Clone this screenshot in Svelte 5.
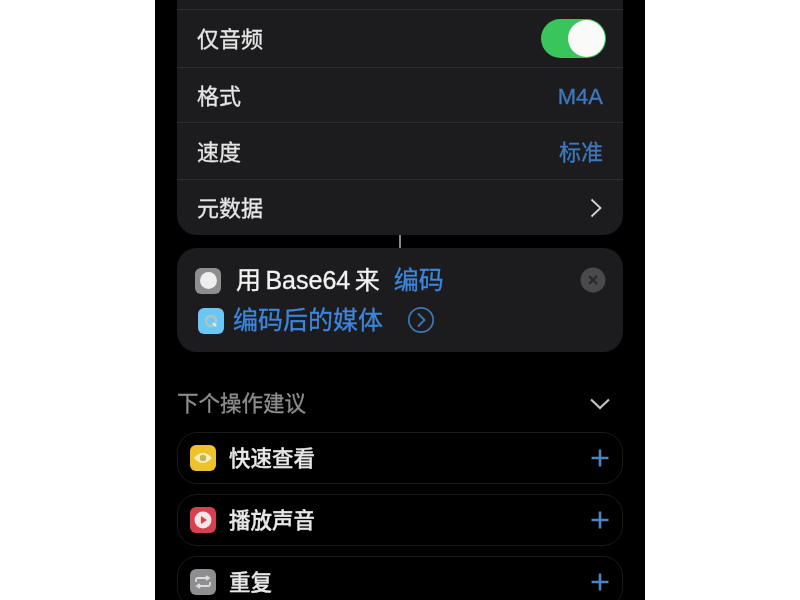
<script>
  const settings = [
    { label: '格式', value: 'M4A', latin: true },
    { label: '速度', value: '标准', latin: false }
  ];

  const suggestions = [
    { name: '快速查看', icon: 'eye' },
    { name: '播放声音', icon: 'play' },
    { name: '重复', icon: 'repeat' }
  ];
</script>

<div class="page">
  <div class="phone">
    <section class="card">
      <div class="row sliver"></div>
      <div class="row">
        <span class="text">仅音频</span>
        <div class="toggle"><div class="knob"></div></div>
      </div>
      {#each settings as item}
        <div class="row">
          <span class="text">{item.label}</span>
          <span class="value" class:text={!item.latin} class:latin={item.latin}>{item.value}</span>
        </div>
      {/each}
      <div class="row last">
        <span class="text">元数据</span>
        <svg class="chevron" width="14" height="22" viewBox="0 0 14 22">
          <path d="M2.5 2.5 L11.5 11 L2.5 19.5" fill="none" stroke="#d4d4d4" stroke-width="1.8" />
        </svg>
      </div>
    </section>

    <div class="connector"></div>

    <section class="action">
      <div class="line">
        <div class="app-icon gray"><div class="dot"></div></div>
        <span class="title">用 Base64 来</span>
        <span class="token">编码</span>
        <svg class="close" width="26" height="26" viewBox="0 0 26 26">
          <circle cx="13" cy="13" r="12.5" fill="#4a4a4c" />
          <path d="M9 9 L17 17 M17 9 L9 17" stroke="#2a2a2c" stroke-width="2.4" />
        </svg>
      </div>
      <div class="line second">
        <div class="app-icon blue">
          <svg width="16" height="16" viewBox="0 0 16 16">
            <circle cx="8" cy="8" r="5" fill="none" stroke="#a9c8c4" stroke-width="2.6" />
            <path d="M10 10 L13 13" stroke="#d6f1fb" stroke-width="2.4" />
          </svg>
        </div>
        <span class="token big">编码后的媒体</span>
        <svg class="more" width="28" height="28" viewBox="0 0 28 28">
          <circle cx="14" cy="14" r="12.2" fill="none" stroke="#3f78b8" stroke-width="1.7" />
          <path d="M11 7.5 L17.5 14 L11 20.5" fill="none" stroke="#3f78b8" stroke-width="1.8" />
        </svg>
      </div>
    </section>

    <div class="heading">
      <span class="text">下个操作建议</span>
      <svg width="22" height="14" viewBox="0 0 22 14">
        <path d="M2 2.5 L11 11 L20 2.5" fill="none" stroke="#c4c4c4" stroke-width="2.2" />
      </svg>
    </div>

    <div class="list">
      {#each suggestions as item}
        <div class="item">
          <div class="app-icon {item.icon}">
            {#if item.icon === 'eye'}
              <svg width="20" height="14" viewBox="0 0 20 14">
                <path d="M1 7 Q10 -3 19 7 Q10 17 1 7 Z" fill="#f7eebb" />
                <circle cx="10" cy="7" r="3.2" fill="#c4b450" />
              </svg>
            {:else if item.icon === 'play'}
              <svg width="18" height="18" viewBox="0 0 18 18">
                <circle cx="9" cy="9" r="8.5" fill="#f8e6e8" />
                <path d="M7 5 L13 9 L7 13 Z" fill="#d8404f" />
              </svg>
            {:else}
              <svg width="18" height="14" viewBox="0 0 18 14">
                <path d="M2 7 V5 Q2 3 4 3 H14 M12 1 L15 3 L12 5 M16 7 V9 Q16 11 14 11 H4 M6 9 L3 11 L6 13" fill="none" stroke="#dcdcdc" stroke-width="1.8" />
              </svg>
            {/if}
          </div>
          <span class="name text">{item.name}</span>
          <svg class="plus" width="20" height="20" viewBox="0 0 20 20">
            <path d="M10 1.5 V18.5 M1.5 10 H18.5" stroke="#4d82c4" stroke-width="2.6" />
          </svg>
        </div>
      {/each}
    </div>
  </div>
</div>

<style>
  :global(body) {
    background: #fff;
  }

  .page {
    display: flex;
    justify-content: center;
    height: 600px;
    overflow: hidden;
    font-family: "Liberation Sans", "Noto Sans CJK SC", sans-serif;
    -webkit-text-stroke: 0.3px;
  }

  .phone {
    width: 490px;
    height: 600px;
    box-sizing: border-box;
    padding: 0 22px;
    background: #000;
    overflow: hidden;
    filter: blur(0.6px);
  }

  /* CJK glyphs sit low in the line box, pull them back to centre */
  .text {
    padding-bottom: 3px;
  }

  .latin {
    padding-top: 3px;
    font-weight: 500;
  }

  .card {
    background: #1c1c1e;
    border-radius: 0 0 20px 20px;
    color: #e6e6e6;
    font-size: 22px;
  }

  .row {
    height: 55px;
    box-sizing: border-box;
    padding: 0 20px;
    display: flex;
    align-items: center;
    justify-content: space-between;
    border-bottom: 1px solid #2c2c2e;
  }

  .sliver {
    height: 10px;
  }

  .row:nth-child(2) {
    height: 58px;
  }

  .row:nth-child(4) {
    height: 57px;
  }

  .last {
    height: 55px;
    border-bottom: none;
  }

  .value {
    color: #3f78c0;
  }

  .toggle {
    width: 65px;
    height: 39px;
    margin-right: -3px;
    box-sizing: border-box;
    padding: 1px;
    border-radius: 20px;
    background: #3ac45c;
    display: flex;
    justify-content: flex-end;
  }

  .knob {
    width: 37px;
    height: 37px;
    border-radius: 50%;
    background: #fafaf8;
  }

  .connector {
    width: 2px;
    height: 13px;
    margin: 0 auto;
    background: #8a8a8a;
  }

  .action {
    height: 104px;
    box-sizing: border-box;
    padding: 17px 17px 0 18px;
    background: #1c1c1e;
    border-radius: 20px;
    font-size: 25px;
  }

  .line {
    display: flex;
    align-items: center;
    height: 30px;
  }

  .line .app-icon {
    margin-top: 1px;
  }

  .line > span {
    padding-bottom: 4px;
  }

  .second {
    margin-top: 10px;
  }

  .title {
    margin-left: 15px;
    color: #f2f2f2;
    word-spacing: -2.5px;
  }

  .token {
    margin-left: 14px;
    color: #3d86dc;
  }

  .token.big {
    margin-left: 9px;
  }

  .close {
    margin-left: auto;
  }

  .more {
    margin-left: 24px;
  }

  .app-icon {
    width: 26px;
    height: 26px;
    border-radius: 6px;
    flex: none;
    display: flex;
    align-items: center;
    justify-content: center;
  }

  .gray {
    background: #8e8e90;
  }

  .dot {
    width: 17px;
    height: 17px;
    border-radius: 50%;
    background: #eeeeee;
  }

  .blue {
    background: #6ac6f4;
    margin-left: 3px;
  }

  .heading {
    display: flex;
    align-items: center;
    justify-content: space-between;
    margin-top: 38px;
    height: 28px;
    padding-right: 12px;
    color: #8e8e90;
    font-size: 21.5px;
  }

  .heading .text {
    padding-bottom: 5px;
  }

  .list {
    display: flex;
    flex-direction: column;
    gap: 10px;
    margin-top: 14px;
  }

  .item {
    flex: none;
    height: 52px;
    box-sizing: border-box;
    padding: 0 12px;
    display: flex;
    align-items: center;
    border: 1px solid #1a1a1c;
    border-radius: 20px;
  }

  .name {
    margin-left: 13px;
    color: #e8e8e8;
    font-size: 21.5px;
    font-weight: 500;
  }

  .plus {
    margin-left: auto;
  }

  .eye {
    background: #eec32a;
  }

  .play {
    background: #d8404f;
  }

  .repeat {
    background: #8e8e90;
  }
</style>
